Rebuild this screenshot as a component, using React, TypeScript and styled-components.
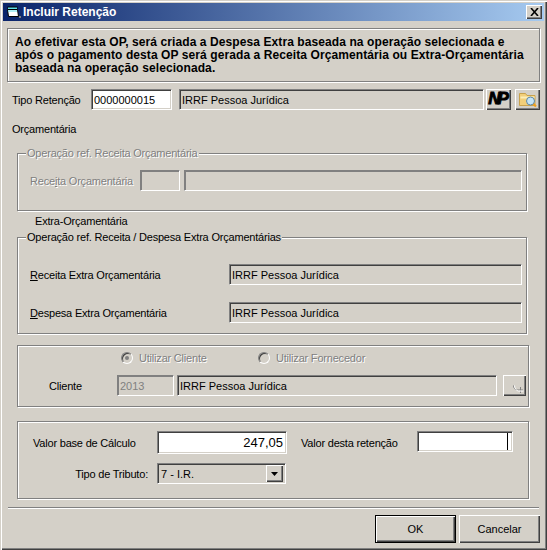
import React from 'react';
import styled, { createGlobalStyle } from 'styled-components';

const GlobalStyle = createGlobalStyle`
  html, body {
    margin: 0;
    padding: 0;
    background: #d4d0c8;
  }
  * {
    box-sizing: border-box;
  }
`;

const Window = styled.div`
  width: 547px;
  height: 550px;
  padding: 3px;
  background: #d4d0c8;
  font-family: 'Liberation Sans', Arial, sans-serif;
  font-size: 11px;
  letter-spacing: -0.2px;
  line-height: 14px;
  color: #000;
  box-shadow: inset 1px 1px 0 #d4d0c8, inset 2px 2px 0 #fff, inset -1px -1px 0 #404040, inset -2px -2px 0 #808080;
  overflow: hidden;
`;

const TitleBar = styled.div`
  height: 18px;
  display: flex;
  align-items: center;
  padding: 0 2px;
  background: linear-gradient(90deg, #0a246a, #a6caf0);
`;

const TitleText = styled.span`
  margin-left: 2px;
  color: #fff;
  font-size: 12px;
  letter-spacing: 0;
  font-weight: bold;
  flex: 1;
`;

const CloseButton = styled.div`
  width: 16px;
  height: 14px;
  display: flex;
  align-items: center;
  justify-content: center;
  background: #d4d0c8;
  box-shadow: inset 1px 1px 0 #fff, inset -1px -1px 0 #404040, inset -2px -2px 0 #808080;
`;

const Body = styled.div`
  padding: 7px 0 0 4px;
`;

const InfoPanel = styled.div`
  width: 533px;
  height: 54px;
  padding: 7px 7px;
  font-size: 12px;
  letter-spacing: 0.09px;
  line-height: 13px;
  font-weight: bold;
  white-space: nowrap;
  border: 1px solid #808080;
  box-shadow: 1px 1px 0 #fff, inset 1px 1px 0 #fff;
`;

const TipoRow = styled.div`
  display: flex;
  align-items: center;
  margin-top: 7px;
  height: 21px;
  padding-left: 5px;
`;

const Label = styled.span<{ $width?: number; $disabled?: boolean; $right?: boolean; $pad?: number }>`
  flex: none;
  white-space: nowrap;
  width: ${(p) => (p.$width ? `${p.$width}px` : 'auto')};
  padding-left: ${(p) => p.$pad ?? 0}px;
  text-align: ${(p) => (p.$right ? 'right' : 'left')};
  color: ${(p) => (p.$disabled ? '#808080' : '#000')};
  text-shadow: ${(p) => (p.$disabled ? '1px 1px 0 #fff' : 'none')};
`;

const Field = styled.div<{ $width: number; $height?: number; $white?: boolean; $gap?: number; $right?: boolean; $dim?: boolean; $size?: number; $top?: boolean }>`
  flex: none;
  display: flex;
  align-items: center;
  justify-content: ${(p) => (p.$right ? 'flex-end' : 'flex-start')};
  align-self: ${(p) => (p.$top ? 'flex-start' : 'auto')};
  width: ${(p) => p.$width}px;
  height: ${(p) => p.$height ?? 21}px;
  margin-left: ${(p) => p.$gap ?? 0}px;
  padding: 0 3px 0 2px;
  font-size: ${(p) => p.$size ?? 11}px;
  letter-spacing: 0;
  white-space: nowrap;
  background: ${(p) => (p.$white ? '#fff' : '#d4d0c8')};
  color: ${(p) => (p.$dim ? '#808080' : '#000')};
  border: 1px solid;
  border-color: #808080 #fff #fff #808080;
  box-shadow: inset 1px 1px 0 ${(p) => (p.$dim ? '#808080' : '#404040')}, inset -1px -1px 0 #d4d0c8;
`;

const Caret = styled.span`
  width: 1px;
  height: 17px;
  background: #000;
  margin-right: 1px;
`;

const ToolButton = styled.div<{ $gap: number; $height?: number; $width?: number }>`
  flex: none;
  display: flex;
  align-items: center;
  justify-content: center;
  width: ${(p) => p.$width ?? 25}px;
  height: ${(p) => p.$height ?? 21}px;
  margin-left: ${(p) => p.$gap}px;
  margin-top: ${(p) => (p.$height ? 0 : -1)}px;
  background: #d4d0c8;
  box-shadow: inset 1px 1px 0 #fff, inset -1px -1px 0 #404040, inset -2px -2px 0 #808080;
`;

const NpMark = styled.span`
  font-family: 'Liberation Sans', Arial, sans-serif;
  font-size: 17px;
  line-height: 18px;
  font-weight: bold;
  font-style: italic;
  letter-spacing: -3px;
  padding-right: 3px;
  -webkit-text-stroke: 0.9px #000;
`;

const SectionTitle = styled.div<{ $top: number; $left: number }>`
  height: 14px;
  margin-top: ${(p) => p.$top}px;
  padding-left: ${(p) => p.$left}px;
`;

const Group = styled.div<{ $top: number; $width: number; $height: number; $pad?: number }>`
  width: ${(p) => p.$width}px;
  height: ${(p) => p.$height}px;
  margin: ${(p) => p.$top}px 0 0 10px;
  padding-top: ${(p) => p.$pad ?? 0}px;
  border: 1px solid #808080;
  box-shadow: 1px 1px 0 #fff, inset 1px 1px 0 #fff;
`;

const Legend = styled.div<{ $disabled?: boolean }>`
  width: fit-content;
  height: 14px;
  margin: -8px 0 0 8px;
  padding: 0 1px;
  background: #d4d0c8;
  color: ${(p) => (p.$disabled ? '#808080' : '#000')};
  text-shadow: ${(p) => (p.$disabled ? '1px 1px 0 #fff' : 'none')};
`;

const GroupRow = styled.div<{ $top: number; $left: number }>`
  display: flex;
  align-items: center;
  margin-top: ${(p) => p.$top}px;
  padding-left: ${(p) => p.$left}px;
`;

const Radio = styled.span<{ $checked?: boolean }>`
  flex: none;
  display: flex;
  align-items: center;
  justify-content: center;
  width: 12px;
  height: 12px;
  margin-right: 6px;
  border-radius: 50%;
  background: #d4d0c8;
  border: 1px solid;
  border-color: #808080 #fff #fff #808080;
  box-shadow: inset 1px 1px 0 #404040;

  &::after {
    content: '';
    display: ${(p) => (p.$checked ? 'block' : 'none')};
    width: 4px;
    height: 4px;
    border-radius: 50%;
    background: #808080;
  }
`;

const ComboText = styled.span`
  flex: 1;
  padding-left: 1px;
`;

const ComboArrow = styled.div`
  width: 17px;
  height: 17px;
  margin-right: -1px;
  display: flex;
  align-items: center;
  justify-content: center;
  background: #d4d0c8;
  box-shadow: inset 1px 1px 0 #fff, inset -1px -1px 0 #404040, inset -2px -2px 0 #808080;
`;

const Separator = styled.div`
  width: 531px;
  height: 2px;
  margin: 8px 0 0 1px;
  background: #808080;
  border-bottom: 1px solid #fff;
`;

const Footer = styled.div`
  display: flex;
  justify-content: flex-end;
  gap: 3px;
  width: 533px;
  margin-top: 6px;
  letter-spacing: 0;
`;

const PushButton = styled.div<{ $default?: boolean }>`
  width: 81px;
  height: 28px;
  display: flex;
  align-items: center;
  justify-content: center;
  background: #d4d0c8;
  border: ${(p) => (p.$default ? '1px solid #000' : 'none')};
  box-shadow: inset 1px 1px 0 #fff, inset -1px -1px 0 #404040, inset -2px -2px 0 #808080;
`;

const App: React.FC = () => {
  return (
    <Window>
      <GlobalStyle />
      <TitleBar>
        <svg width="16" height="16" viewBox="0 0 16 16">
          <path d="M2.5 2.5h10v3h-10z" fill="#000" />
          <path d="M3 3.5h9v2H3z" fill="#5fe0ea" />
          <path d="M2.5 5.5h10l1 7h-10z" fill="#fff" stroke="#000" />
          <path d="M3 7h9" stroke="#5fe0ea" />
          <path d="M14 12h2v2h-2z" fill="#808080" />
        </svg>
        <TitleText>Incluir Retenção</TitleText>
        <CloseButton>
          <svg width="9" height="8" viewBox="0 0 9 8">
            <path d="M1 0l7 8M8 0L1 8" fill="none" stroke="#000" strokeWidth="1.6" />
          </svg>
        </CloseButton>
      </TitleBar>

      <Body>
        <InfoPanel>
          Ao efetivar esta OP, será criada a Despesa Extra baseada na operação selecionada e
          <br />
          após o pagamento desta OP será gerada a Receita Orçamentária ou Extra-Orçamentária
          <br />
          baseada na operação selecionada.
        </InfoPanel>

        <TipoRow>
          <Label $width={79}>Tipo Retenção</Label>
          <Field $width={81} $white>0000000015</Field>
          <Field $width={305} $gap={7}>IRRF Pessoa Jurídica</Field>
          <ToolButton $gap={2}>
            <NpMark>NP</NpMark>
          </ToolButton>
          <ToolButton $gap={4}>
            <svg width="20" height="17" viewBox="0 0 20 17">
              <path d="M1.5 14.5v-12h6l1.5 2h8v10z" fill="#f2cf7a" stroke="#c9a24c" />
              <path d="M2.5 6.5h14" stroke="#fdeeb8" strokeWidth="2" />
              <circle cx="12.5" cy="10" r="4" fill="#c4e4f6" stroke="#5f87a6" />
              <path d="M15.5 13l2.5 2.5" stroke="#ee9f1c" strokeWidth="2.2" />
            </svg>
          </ToolButton>
        </TipoRow>

        <SectionTitle $top={12} $left={5}>Orçamentária</SectionTitle>

        <Group $top={17} $width={510} $height={58}>
          <Legend $disabled>Operação ref. Receita Orçamentária</Legend>
          <GroupRow $top={10} $left={12}>
            <Label $width={110} $disabled>Rece<u>i</u>ta Orçamentária</Label>
            <Field $width={40} $dim />
            <Field $width={338} $gap={4} $dim />
          </GroupRow>
        </Group>

        <SectionTitle $top={3} $left={28}>Extra-Orçamentária</SectionTitle>

        <Group $top={9} $width={510} $height={97}>
          <Legend>Operação ref. Receita / Despesa Extra Orçamentárias</Legend>
          <GroupRow $top={20} $left={12}>
            <Label $width={199}><u>R</u>eceita Extra Orçamentária</Label>
            <Field $width={293}>IRRF Pessoa Jurídica</Field>
          </GroupRow>
          <GroupRow $top={17} $left={12}>
            <Label $width={199}><u>D</u>espesa Extra Orçamentária</Label>
            <Field $width={293}>IRRF Pessoa Jurídica</Field>
          </GroupRow>
        </Group>

        <Group $top={11} $width={512} $height={62} $pad={5}>
          <GroupRow $top={0} $left={103}>
            <Radio $checked />
            <Label $width={119} $disabled>Utilizar Cliente</Label>
            <Radio />
            <Label $disabled>Utilizar Fornecedor</Label>
          </GroupRow>
          <GroupRow $top={10} $left={31}>
            <Label $width={68}>Cliente</Label>
            <Field $width={57} $dim>2013</Field>
            <Field $width={320} $gap={3}>IRRF Pessoa Jurídica</Field>
            <ToolButton $gap={6} $width={23} $height={21}>
              <svg width="23" height="21" viewBox="0 0 23 21">
                <path d="M10.5 10.5c0 3 2 4.5 4 4.5h5.5M17.5 12v6" fill="none" stroke="#808080" />
                <path d="M11.5 10.5c0 3 2 5.5 4 5.5h5" fill="none" stroke="#fff" />
              </svg>
            </ToolButton>
          </GroupRow>
        </Group>

        <Group $top={14} $width={512} $height={78} $pad={9}>
          <GroupRow $top={0} $left={15}>
            <Label $width={124}>Valor base de Cálculo</Label>
            <Field $width={130} $height={23} $white $right $size={13}>247,05</Field>
            <Label $width={130} $pad={14}>Valor desta retenção</Label>
            <Field $width={96} $white $right $top>
              <Caret />
            </Field>
          </GroupRow>
          <GroupRow $top={9} $left={15}>
            <Label $width={115} $right>Tipo de Tributo:</Label>
            <Field $width={129} $gap={9}>
              <ComboText>7 - I.R.</ComboText>
              <ComboArrow>
                <svg width="7" height="4" viewBox="0 0 7 4">
                  <path d="M0 0h7L3.5 4z" fill="#000" />
                </svg>
              </ComboArrow>
            </Field>
          </GroupRow>
        </Group>

        <Separator />

        <Footer>
          <PushButton $default>OK</PushButton>
          <PushButton>Cancelar</PushButton>
        </Footer>
      </Body>
    </Window>
  );
};

export default App;
